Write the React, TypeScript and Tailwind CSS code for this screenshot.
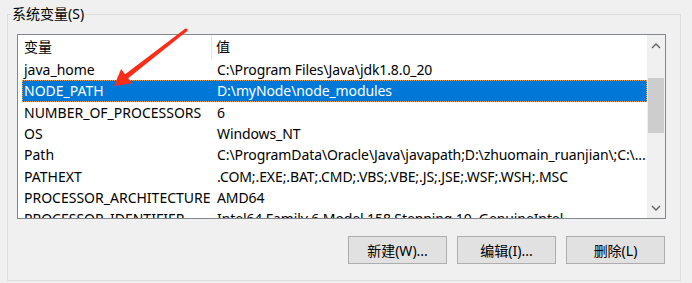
import React from "react";

const rows: [string, string][] = [
  ["java_home", "C:\\Program Files\\Java\\jdk1.8.0_20"],
  ["NODE_PATH", "D:\\myNode\\node_modules"],
  ["NUMBER_OF_PROCESSORS", "6"],
  ["OS", "Windows_NT"],
  ["Path", "C:\\ProgramData\\Oracle\\Java\\javapath;D:\\zhuomain_ruanjian\\;C:\\..."],
  ["PATHEXT", ".COM;.EXE;.BAT;.CMD;.VBS;.VBE;.JS;.JSE;.WSF;.WSH;.MSC"],
  ["PROCESSOR_ARCHITECTURE", "AMD64"],
  ["PROCESSOR_IDENTIFIER", "Intel64 Family 6 Model 158 Stepping 10, GenuineIntel"],
];

function Btn({ label }: { label: string }) {
  return (
    <div className="w-[99px] h-[28px] bg-[#e1e1e1] border border-[#adadad] flex items-center justify-center text-[14px] text-black">
      {label}
    </div>
  );
}

export default function App() {
  return (
    <div
      className="relative w-[692px] h-[283px] bg-[#f0f0f0] overflow-hidden text-black"
      style={{ fontFamily: '"Noto Sans", "Noto Sans CJK SC", sans-serif' }}
    >
      <div className="pl-[7px] pt-[14px] pr-[11px] pb-[2px] h-full">
        <div className="relative h-full border border-[#dcdcdc] pl-[9px] pt-[19px] pr-[14px]">
          <div className="absolute left-[3px] top-[-11px] px-[1px] bg-[#f0f0f0] text-[14px] leading-[20px]">
            系统变量(S)
          </div>
          {/* list box */}
          <div className="h-[185px] border border-[#828790] bg-white flex">
            <div className="flex-1 min-w-0 overflow-hidden">
              {/* header */}
              <div className="h-[24px] flex text-[14px] leading-[24px]">
                <div className="w-[194px] pl-[6px] border-r border-[#e5e5e5]">变量</div>
                <div className="pl-[4px]">值</div>
              </div>
              <div className="pl-[4px]">
                {rows.map(([k, v], i) => {
                  const sel = i === 1;
                  return (
                    <div
                      key={k}
                      className={
                        "h-[21.33px] flex text-[14px] leading-[20px] whitespace-nowrap " +
                        (sel
                          ? "bg-[#0078d7] text-white border border-dotted border-[#e8a25a]"
                          : "border border-transparent")
                      }
                    >
                      <div className="w-[189px] flex-none pl-[1px]">{k}</div>
                      <div className="flex-none pl-[5px] tracking-[-0.1px]">{v}</div>
                    </div>
                  );
                })}
              </div>
            </div>
            {/* scrollbar */}
            <div className="w-[18px] flex-none bg-[#f0f0f0] flex flex-col items-center">
              <div className="h-[21px] w-full flex items-center justify-center">
                <svg width="10" height="6" viewBox="0 0 10 6">
                  <path d="M1 5 L5 1 L9 5" fill="none" stroke="#606060" strokeWidth="1.4" />
                </svg>
              </div>
              <div className="mt-[22px] w-[16px] h-[55px] bg-[#cdcdcd]" />
              <div className="flex-1" />
              <div className="h-[21px] w-full flex items-center justify-center">
                <svg width="10" height="6" viewBox="0 0 10 6">
                  <path d="M1 1 L5 5 L9 1" fill="none" stroke="#606060" strokeWidth="1.4" />
                </svg>
              </div>
            </div>
          </div>
          {/* buttons */}
          <div className="mt-[17px] flex justify-end gap-[10px] pr-[1px]">
            <Btn label="新建(W)..." />
            <Btn label="编辑(I)..." />
            <Btn label="删除(L)" />
          </div>
        </div>
      </div>
      {/* red annotation arrow */}
      <svg className="absolute left-0 top-0 pointer-events-none" width="692" height="283">
        <polygon
          points="114,86 121.1,69.1 125.1,74.2 185.1,28.8 186.9,31.2 128.1,78.2 132.1,83.3"
          fill="#fa2d17"
        />
        <circle cx="186" cy="30" r="1.6" fill="#fa2d17" />
      </svg>
    </div>
  );
}
